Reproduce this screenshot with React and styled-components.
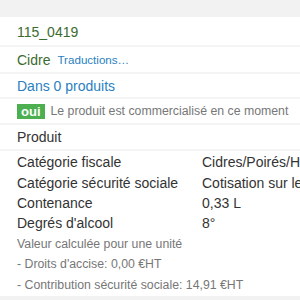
import React from 'react';
import styled, { createGlobalStyle } from 'styled-components';

const GlobalStyle = createGlobalStyle`
  body {
    margin: 0;
    background: #fff;
    font-family: "Liberation Sans", Arial, Helvetica, sans-serif;
    color: #333;
  }
`;

const Page = styled.div`
  width: 300px;
  height: 300px;
  overflow: hidden;
  background: #fff;
`;

const TopBar = styled.div`
  height: 17px;
  background: #f2f2f2;
`;

const Row = styled.div`
  display: flex;
  align-items: center;
  gap: ${p => p.gap || 0}px;
  height: ${p => p.h}px;
  padding: ${p => p.pt || 0}px 17px 0;
  border-bottom: 2px solid #f4f4f4;
  white-space: nowrap;
  font-size: 14px;
`;

const Code = styled.span`
  color: #3c6b2f;
`;

const Name = styled.span`
  color: #3c6b2f;
`;

const Link = styled.a`
  color: #2a7fc1;
  font-size: ${p => p.size || 14}px;
  text-decoration: none;
`;

const Badge = styled.span`
  display: inline-block;
  background: #4cb050;
  color: #fff;
  font-weight: bold;
  font-size: 13px;
  line-height: 15px;
  padding: 0 4px;
`;

const Note = styled.span`
  color: #777;
  font-size: 12.3px;
`;

const Props = styled.div`
  padding: 1px 17px 0;
  white-space: nowrap;
  height: 144px;
`;

const PropRow = styled.div`
  display: grid;
  grid-template-columns: 185px 1fr;
  height: 20.4px;
  align-items: center;
  font-size: 14px;
  color: #333;
`;

const SubNote = styled.div`
  height: 20.4px;
  display: flex;
  align-items: center;
  font-size: 12.3px;
  color: #777;
`;

const BottomBar = styled.div`
  height: 20px;
  background: #f2f2f2;
`;

const props = [
  ['Catégorie fiscale', 'Cidres/Poirés/Hydromels'],
  ['Catégorie sécurité sociale', 'Cotisation sur les boissons alcooliques'],
  ['Contenance', '0,33 L'],
  ["Degrés d'alcool", '8°'],
];

const notes = [
  'Valeur calculée pour une unité',
  "- Droits d'accise: 0,00 €HT",
  '- Contribution sécurité sociale: 14,91 €HT',
];

export default function App() {
  return (
    <Page>
      <GlobalStyle />
      <TopBar />
      <Row h={26} pt={2}>
        <Code>115_0419</Code>
      </Row>
      <Row h={25} gap={7}>
        <Name>Cidre</Name>
        <Link size={11.6}>Traductions…</Link>
      </Row>
      <Row h={23}>
        <Link>Dans 0 produits</Link>
      </Row>
      <Row h={24} gap={6}>
        <Badge>oui</Badge>
        <Note>Le produit est commercialisé en ce moment</Note>
      </Row>
      <Row h={24}>Produit</Row>
      <Props>
        {props.map(([k, v]) => (
          <PropRow key={k}>
            <span>{k}</span>
            <span>{v}</span>
          </PropRow>
        ))}
        {notes.map(n => (
          <SubNote key={n}>{n}</SubNote>
        ))}
      </Props>
      <BottomBar />
    </Page>
  );
}
